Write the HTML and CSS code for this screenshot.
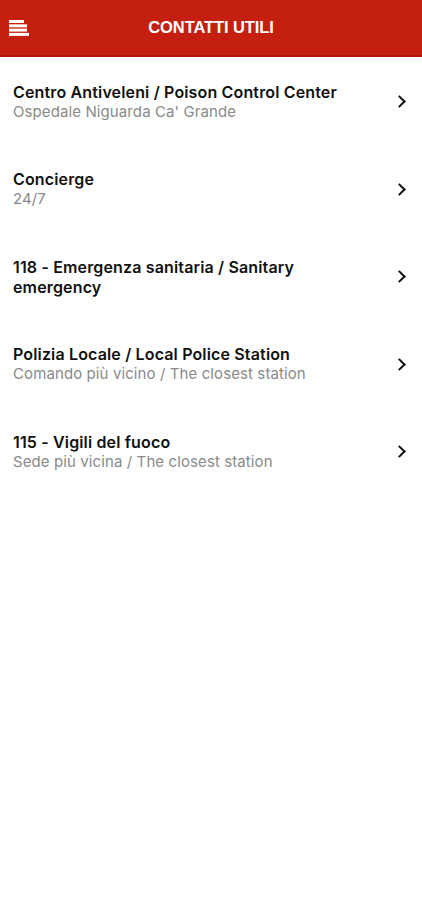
FILE: index.html
```html
<!DOCTYPE html>
<html lang="it">
<head>
  <meta charset="UTF-8" />
  <meta name="viewport" content="width=device-width, initial-scale=1.0" />
  <title>Contatti utili</title>
  <link rel="stylesheet" href="styles.css">
</head>
<body>
  <header class="topbar">
    <button class="menu" aria-label="Menu">
      <svg width="20" height="16" viewBox="0 0 20 16">
        <rect x="0" y="0" width="15" height="3" fill="#fff"/>
        <rect x="0" y="4.3" width="18" height="3" fill="#fff"/>
        <rect x="0" y="8.6" width="18" height="3" fill="#fff"/>
        <rect x="0" y="12.9" width="20" height="3" fill="#fff"/>
      </svg>
    </button>
    <h1>CONTATTI UTILI</h1>
  </header>

  <ul class="contacts">
    <li class="contact">
      <div class="info">
        <div class="name">Centro Antiveleni / Poison Control Center</div>
        <div class="sub">Ospedale Niguarda Ca' Grande</div>
      </div>
      <span class="chev"></span>
    </li>
    <li class="contact">
      <div class="info">
        <div class="name">Concierge</div>
        <div class="sub">24/7</div>
      </div>
      <span class="chev"></span>
    </li>
    <li class="contact">
      <div class="info">
        <div class="name">118 - Emergenza sanitaria / Sanitary emergency</div>
      </div>
      <span class="chev"></span>
    </li>
    <li class="contact">
      <div class="info">
        <div class="name">Polizia Locale / Local Police Station</div>
        <div class="sub">Comando più vicino / The closest station</div>
      </div>
      <span class="chev"></span>
    </li>
    <li class="contact">
      <div class="info">
        <div class="name">115 - Vigili del fuoco</div>
        <div class="sub">Sede più vicina / The closest station</div>
      </div>
      <span class="chev"></span>
    </li>
  </ul>
</body>
</html>
```

FILE: styles.css
```css
body {
  margin: 0;
  background: #fff;
  font-family: Inter, "Liberation Sans", Arial, sans-serif;
}
.topbar {
  height: 55px;
  background: #c5200f;
  border-bottom: 2px solid #b01a0c;
  display: flex;
  align-items: center;
  justify-content: center;
  position: relative;
}
.topbar h1 {
  margin: 0;
  color: #fff;
  font-family: "Liberation Sans", Arial, sans-serif;
  font-size: 16.5px;
  font-weight: bold;
  letter-spacing: -0.1px;
}
.menu {
  position: absolute;
  left: 9px;
  top: 20px;
  padding: 0;
  border: none;
  background: none;
  line-height: 0;
}
.contacts {
  list-style: none;
  margin: 0;
  padding: 1px 0 0;
}
.contact {
  display: flex;
  align-items: center;
  padding: 23.75px 14px 23.75px 13px;
}
.info {
  flex: 1;
  padding-right: 50px;
}
.name {
  font-size: 16px;
  line-height: 20px;
  font-weight: 600;
  letter-spacing: 0.15px;
  color: #111;
}
.sub {
  font-size: 15px;
  line-height: 20px;
  letter-spacing: 0.1px;
  color: #8a8a8a;
}
.chev {
  width: 7px;
  height: 7px;
  border-top: 2.5px solid #111;
  border-right: 2.5px solid #111;
  transform: rotate(45deg);
  margin-right: 4px;
}
```
